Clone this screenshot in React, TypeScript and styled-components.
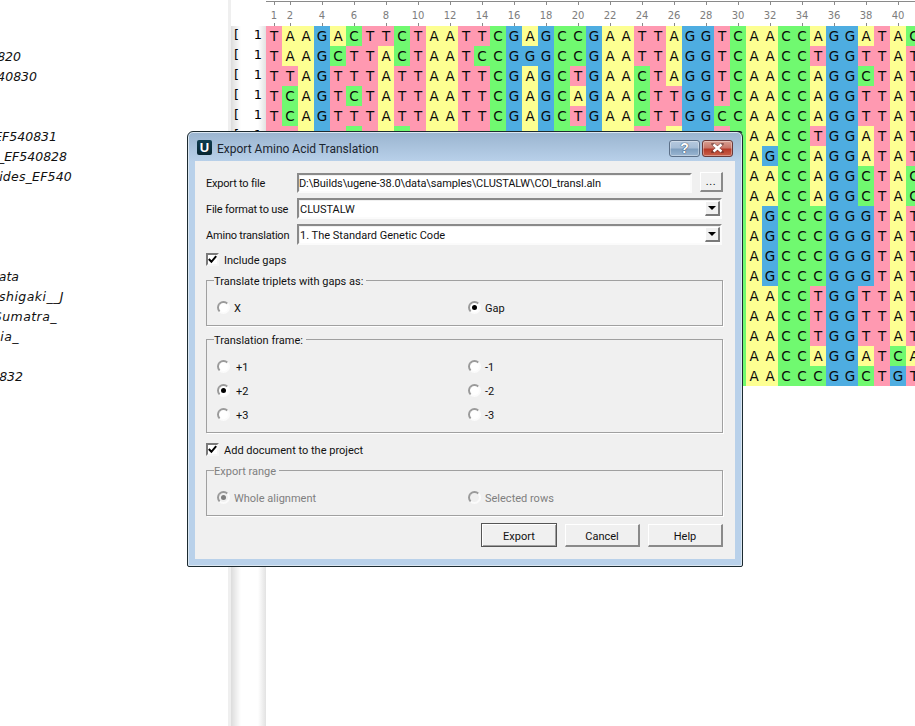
import React from "react";
import styled, { createGlobalStyle } from "styled-components";

const GlobalStyle = createGlobalStyle`
  html, body { margin: 0; padding: 0; background: #fff; overflow: hidden; }
  #root { width: 915px; height: 726px; }
`;

const BASE_COLORS: Record<string, string> = {
  A: "#fdff92",
  C: "#70f970",
  G: "#4eade1",
  T: "#ff99b1",
};

const PREFIX = "TTAGTCTACTAATTCGAGCCGAATTAGGTC";
const ROWS = [
  "TAAGACTTCTAATTCGAGCCGAATTAGGTCAACCAGGATAC",
  "TAAGCTTACTAATCCGGGCCGAATTAGGTCAACCTGGTTAT",
  "TTAGTTTATTAATTCGAGCTGAACTAGGTCAACCAGGCTAT",
  "TCAGTCTATTAATTCGAGCAGAACTTGGTCAACCAGGTTAT",
  "TCAGTTTATTAATTCGAGCTGAACTTGGCCAACCAGGTTAT",
  PREFIX + "AACCTGGATAT",
  PREFIX + "AGCCAGGATAT",
  PREFIX + "AACCAGGCTAC",
  PREFIX + "AACCAGGCTAC",
  PREFIX + "AGCCCGGGTAT",
  PREFIX + "AGCCCGGGTAT",
  PREFIX + "AGCCCGGGTAT",
  PREFIX + "AGCCCGGGTAT",
  PREFIX + "AACCTGGTTAT",
  PREFIX + "AACCTGGTTAT",
  PREFIX + "AACCTGGTTAT",
  PREFIX + "AACCAGGATCA",
  PREFIX + "AACCCGGCTGT",
];

const NAMES: { text: string; end: number; track?: number }[] = [
  { text: "", end: 0 },
  { text: "820", end: 21 },
  { text: "40830", end: 37 },
  { text: "", end: 0 },
  { text: "", end: 0 },
  { text: "EF540831", end: 57 },
  { text: "_EF540828", end: 67 },
  { text: "ides_EF540", end: 72, track: 0.2 },
  { text: "", end: 0 },
  { text: "", end: 0 },
  { text: "", end: 0 },
  { text: "", end: 0 },
  { text: "ata", end: 19 },
  { text: "shigaki__J", end: 64, track: 0.45 },
  { text: "Sumatra_", end: 57, track: 0.45 },
  { text: "ia_", end: 19, track: 0.45 },
  { text: "", end: 0 },
  { text: "832", end: 23 },
];

const Page = styled.div`
  position: relative;
  display: flex;
  width: 915px;
  height: 726px;
  overflow: hidden;
  background: #fff;
  font-family: "DejaVu Sans", Verdana, sans-serif;
  color: #000;
`;

const NamesColumn = styled.div`
  width: 228px;
  flex: none;
  padding-top: 26px;
  box-sizing: border-box;
  overflow: hidden;
`;

const NameRow = styled.div<{ $end: number; $track?: number }>`
  width: ${(p) => p.$end}px;
  height: 20px;
  display: flex;
  justify-content: flex-end;
  align-items: center;
  white-space: nowrap;
  font-size: 12.5px;
  font-style: italic;
  letter-spacing: ${(p) => p.$track ?? 0}px;
  color: #101010;
`;

const Splitter = styled.div`
  width: 3px;
  flex: none;
  background: #efefef;
`;

const Gutter = styled.div`
  width: 35px;
  flex: none;
  padding-top: 26px;
  box-sizing: border-box;
`;

const GutterBody = styled.div`
  height: 700px;
  background:
    linear-gradient(to right, #dcdcdc 0, #ffffff 10px, #ffffff 27px, #e2e2e2 35px);
`;

const GutterRow = styled.div`
  height: 20px;
  box-sizing: border-box;
  display: flex;
  justify-content: space-between;
  align-items: center;
  padding: 0 4px 4px 3px;
  font-size: 13px;
`;

const Alignment = styled.div`
  flex: none;
  width: 656px;
`;

const Ruler = styled.div`
  height: 26px;
  display: flex;
  box-sizing: border-box;
  padding-top: 1px;
`;

const RulerCell = styled.div<{ $tick: boolean }>`
  position: relative;
  width: 16px;
  flex: none;
  height: 25px;
  display: flex;
  justify-content: center;
  padding-top: 8px;
  box-sizing: border-box;
  border-top: 1px solid #8a8a8a;
  font-size: 10px;
  line-height: 12px;
  color: #7d7d7d;
  &::before,
  &::after {
    content: "";
    display: ${(p) => (p.$tick ? "block" : "none")};
    position: absolute;
    left: 8px;
    width: 1px;
    background: #8a8a8a;
  }
  &::before { top: 0; height: 3px; }
  &::after { bottom: 0; height: 3px; }
`;

const Grid = styled.div`
  display: grid;
  grid-template-columns: repeat(41, 16px);
  grid-auto-rows: 20px;
`;

const Cell = styled.div<{ $base: string }>`
  display: flex;
  align-items: center;
  justify-content: center;
  background: ${(p) => BASE_COLORS[p.$base]};
  font-size: 13.5px;
  color: #0a0a0a;
`;

/* ---------- dialog window ---------- */

const Dialog = styled.div`
  position: absolute;
  left: 187px;
  top: 131px;
  width: 556px;
  height: 436px;
  box-sizing: border-box;
  display: flex;
  flex-direction: column;
  border: 1px solid #1c2a30;
  border-radius: 6px 6px 2px 2px;
  box-shadow: inset 0 0 0 1px #dbe7f2;
  background: linear-gradient(to bottom, #9ab4cf 0, #b9d1ea 30px, #b9d1ea 100%);
  padding: 0 7px 7px 7px;
  font-family: Roboto, Tahoma, sans-serif;
  font-size: 11px;
  color: #111;
`;

const TitleBar = styled.div`
  height: 29px;
  flex: none;
  display: flex;
  align-items: center;
  padding-left: 2px;
  padding-top: 1px;
  box-sizing: border-box;
`;

const AppIcon = styled.div`
  width: 15px;
  height: 15px;
  flex: none;
  display: flex;
  align-items: center;
  justify-content: center;
  border-radius: 2px;
  background: linear-gradient(to bottom, #0f3d4f, #062430);
  color: #fff;
  font-family: "Liberation Sans", sans-serif;
  font-weight: 700;
  font-size: 13px;
`;

const TitleText = styled.div`
  margin-left: 5px;
  padding-top: 4px;
  font-size: 12px;
  color: #1b2530;
  flex: 1;
  white-space: nowrap;
`;

const CaptionButtons = styled.div`
  display: flex;
  gap: 2px;
  margin-right: 2px;
  margin-top: 2px;
`;

const CaptionButton = styled.div<{ $close?: boolean }>`
  width: 31px;
  height: 17px;
  box-sizing: border-box;
  display: flex;
  align-items: center;
  justify-content: center;
  border: 1px solid ${(p) => (p.$close ? "#6a3a3a" : "#5c7088")};
  border-radius: 3px;
  box-shadow: inset 0 0 0 1px rgba(255, 255, 255, 0.35);
  background: ${(p) =>
    p.$close
      ? "linear-gradient(to bottom, #d8a093 0, #c9776a 45%, #b63a28 55%, #c9604a 100%)"
      : "linear-gradient(to bottom, #b5c9de 0, #a6bdd6 45%, #7f9fbf 55%, #9ab6d2 100%)"};
`;

const Client = styled.div`
  flex: 1;
  background: #f0f0f0;
  padding: 12px 12px 0 11px;
  display: flex;
  flex-direction: column;
`;

const FormRow = styled.div<{ $top?: number }>`
  display: grid;
  grid-template-columns: 91px 1fr;
  align-items: center;
  margin-top: ${(p) => p.$top ?? 0}px;
`;

const FieldLabel = styled.div<{ $nudge?: boolean }>`
  white-space: nowrap;
  letter-spacing: -0.2px;
  padding-top: ${(p) => (p.$nudge ? 2 : 0)}px;
`;

const FileField = styled.div`
  display: flex;
  align-items: flex-start;
  gap: 8px;
`;

const sunken = `
  box-sizing: border-box;
  border-style: solid;
  border-width: 2px;
  border-color: #8a8a8a #fbfbfb #fbfbfb #8a8a8a;
  background: #fff;
  box-shadow: inset 1px 1px 0 #f0f0f0;
`;

const TextInput = styled.div`
  ${sunken}
  flex: 1;
  height: 20px;
  display: flex;
  align-items: center;
  padding-left: 0;
  letter-spacing: -0.1px;
  white-space: nowrap;
`;

const BrowseButton = styled.div`
  width: 23px;
  height: 20px;
  box-sizing: border-box;
  margin-top: -1px;
  display: flex;
  justify-content: center;
  align-items: center;
  border-style: solid;
  border-width: 1px 2px 2px 1px;
  border-color: #fff #8a8a8a #8a8a8a #fff;
  padding-bottom: 1px;
  letter-spacing: 0.6px;
`;

const Combo = styled.div`
  ${sunken}
  height: 21px;
  margin-right: 1px;
  display: flex;
  align-items: center;
  justify-content: space-between;
  padding-left: 1px;
  white-space: nowrap;
`;

const ComboText = styled.span`
  padding-top: 2px;
`;

const ComboArrow = styled.div`
  width: 15px;
  height: 15px;
  box-sizing: border-box;
  display: flex;
  justify-content: center;
  align-items: center;
  border-style: solid;
  border-width: 1px 2px 2px 1px;
  border-color: #fff #7a7a7a #7a7a7a #fff;
  background: #f0f0f0;
  &::after {
    content: "";
    border-left: 4px solid transparent;
    border-right: 4px solid transparent;
    border-top: 4px solid #000;
  }
`;

const CheckRow = styled.div<{ $top: number }>`
  display: flex;
  align-items: center;
  gap: 5px;
  height: 16px;
  box-sizing: border-box;
  padding-top: 2px;
  margin-top: ${(p) => p.$top}px;
`;

const CheckBox = styled.div`
  width: 13px;
  height: 13px;
  flex: none;
  margin-top: -2px;
  ${sunken}
  border-width: 2px;
  border-color: #7a7a7a #f6f6f6 #f6f6f6 #7a7a7a;
  box-shadow: none;
  display: flex;
  align-items: center;
  justify-content: center;
`;

const Group = styled.div<{ $top: number }>`
  position: relative;
  margin-top: ${(p) => p.$top}px;
  border: 1px solid #a0a0a0;
  box-shadow: 1px 1px 0 #fff;
  padding: 18px 0 10px 10px;
`;

const GroupTitle = styled.div<{ $disabled?: boolean }>`
  position: absolute;
  top: -6px;
  left: 7px;
  padding-right: 3px;
  background: #f0f0f0;
  line-height: 14px;
  white-space: nowrap;
  color: ${(p) => (p.$disabled ? "#7f7f7f" : "#111")};
`;

const RadioGrid = styled.div`
  display: grid;
  grid-template-columns: 251px 1fr;
  grid-auto-rows: 16px;
  row-gap: 8px;
`;

const RadioItem = styled.div<{ $disabled?: boolean; $gap: number }>`
  display: flex;
  align-items: center;
  gap: ${(p) => p.$gap}px;
  box-sizing: border-box;
  padding-top: 2px;
  color: ${(p) => (p.$disabled ? "#7f7f7f" : "#111")};
  white-space: nowrap;
`;

const RadioMark = styled.div<{ $checked?: boolean; $disabled?: boolean }>`
  width: 13px;
  height: 13px;
  flex: none;
  margin-top: -2px;
  box-sizing: border-box;
  border-radius: 50%;
  border: 2px solid;
  border-color: #9a9a9a #fbfbfb #fbfbfb #9a9a9a;
  background: ${(p) => (p.$disabled ? "#f0f0f0" : "#fff")};
  display: flex;
  align-items: center;
  justify-content: center;
  &::after {
    content: "";
    display: ${(p) => (p.$checked ? "block" : "none")};
    width: 5px;
    height: 5px;
    border-radius: 50%;
    background: ${(p) => (p.$disabled ? "#7f7f7f" : "#000")};
  }
`;

const ButtonRow = styled.div`
  margin-top: 7px;
  display: flex;
  justify-content: flex-end;
  align-items: flex-end;
  gap: 8px;
`;

const PushButton = styled.div<{ $default?: boolean }>`
  box-sizing: border-box;
  width: ${(p) => (p.$default ? 76 : 75)}px;
  height: ${(p) => (p.$default ? 24 : 23)}px;
  display: flex;
  align-items: center;
  justify-content: center;
  padding-top: 2px;
  background: #f0f0f0;
  border-style: solid;
  ${(p) =>
    p.$default
      ? `border-width: 1px; border-color: #555;
         box-shadow: inset 1px 1px 0 #fff, inset -1px -1px 0 #a0a0a0;`
      : `border-width: 1px 2px 2px 1px; border-color: #fff #8a8a8a #8a8a8a #fff;`}
`;

const Check = () => (
  <svg width="9" height="9" viewBox="0 0 9 9">
    <path d="M0.8 4 L3.4 6.8 L8.2 1.2" fill="none" stroke="#000" strokeWidth="2" />
  </svg>
);

const CloseGlyph = () => (
  <svg width="13" height="10" viewBox="0 0 13 10">
    <path
      d="M2 1 L11 9 M11 1 L2 9"
      stroke="#3a2020"
      strokeWidth="3.6"
      strokeLinecap="round"
      opacity="0.45"
    />
    <path d="M2.5 1.5 L10.5 8.5 M10.5 1.5 L2.5 8.5" stroke="#fff" strokeWidth="2.4" />
  </svg>
);

const HelpGlyph = styled.span`
  font-family: "Liberation Sans", sans-serif;
  font-weight: 700;
  font-size: 14px;
  color: #fff;
  text-shadow: 0 0 1px #2e4058, 0 0 1px #2e4058;
`;

const Radio = ({
  label,
  checked,
  disabled,
  gap = 4,
}: {
  label: string;
  checked?: boolean;
  disabled?: boolean;
  gap?: number;
}) => (
  <RadioItem $disabled={disabled} $gap={gap}>
    <RadioMark $checked={checked} $disabled={disabled} />
    {label}
  </RadioItem>
);

export default function App() {
  const rulerNumbers = Array.from({ length: 41 }, (_, i) => i + 1);
  return (
    <Page>
      <GlobalStyle />
      <NamesColumn>
        {NAMES.map((n, i) => (
          <NameRow key={i} $end={n.end} $track={n.track}>
            {n.text}
          </NameRow>
        ))}
      </NamesColumn>
      <Splitter />
      <Gutter>
        <GutterBody>
          {ROWS.map((_, i) => (
            <GutterRow key={i}>
              <span>[</span>
              <span>1</span>
            </GutterRow>
          ))}
        </GutterBody>
      </Gutter>
      <Alignment>
        <Ruler>
          {rulerNumbers.map((n) => {
            const labelled = n === 1 || n % 2 === 0;
            return (
              <RulerCell key={n} $tick={labelled}>
                {labelled && n <= 40 ? n : ""}
              </RulerCell>
            );
          })}
        </Ruler>
        <Grid>
          {ROWS.map((row, r) =>
            row.split("").map((b, c) => (
              <Cell key={`${r}-${c}`} $base={b}>
                {b}
              </Cell>
            ))
          )}
        </Grid>
      </Alignment>

      <Dialog>
        <TitleBar>
          <AppIcon>U</AppIcon>
          <TitleText>Export Amino Acid Translation</TitleText>
          <CaptionButtons>
            <CaptionButton>
              <HelpGlyph>?</HelpGlyph>
            </CaptionButton>
            <CaptionButton $close>
              <CloseGlyph />
            </CaptionButton>
          </CaptionButtons>
        </TitleBar>
        <Client>
          <FormRow>
            <FieldLabel>Export to file</FieldLabel>
            <FileField>
              <TextInput>D:\Builds\ugene-38.0\data\samples\CLUSTALW\COI_transl.aln</TextInput>
              <BrowseButton>...</BrowseButton>
            </FileField>
          </FormRow>
          <FormRow $top={5}>
            <FieldLabel $nudge>File format to use</FieldLabel>
            <Combo>
              <ComboText>CLUSTALW</ComboText>
              <ComboArrow />
            </Combo>
          </FormRow>
          <FormRow $top={5}>
            <FieldLabel $nudge>Amino translation</FieldLabel>
            <Combo>
              <ComboText>1. The Standard Genetic Code</ComboText>
              <ComboArrow />
            </Combo>
          </FormRow>
          <CheckRow $top={6}>
            <CheckBox>
              <Check />
            </CheckBox>
            Include gaps
          </CheckRow>
          <Group $top={13}>
            <GroupTitle>Translate triplets with gaps as:</GroupTitle>
            <RadioGrid>
              <Radio label="X" />
              <Radio label="Gap" checked />
            </RadioGrid>
          </Group>
          <Group $top={13}>
            <GroupTitle>Translation frame:</GroupTitle>
            <RadioGrid>
              <Radio label="+1" gap={6} />
              <Radio label="-1" />
              <Radio label="+2" checked gap={6} />
              <Radio label="-2" />
              <Radio label="+3" gap={6} />
              <Radio label="-3" />
            </RadioGrid>
          </Group>
          <CheckRow $top={8}>
            <CheckBox>
              <Check />
            </CheckBox>
            Add document to the project
          </CheckRow>
          <Group $top={13}>
            <GroupTitle $disabled>Export range</GroupTitle>
            <RadioGrid>
              <Radio label="Whole alignment" checked disabled />
              <Radio label="Selected rows" disabled />
            </RadioGrid>
          </Group>
          <ButtonRow>
            <PushButton $default>Export</PushButton>
            <PushButton>Cancel</PushButton>
            <PushButton>Help</PushButton>
          </ButtonRow>
        </Client>
      </Dialog>
    </Page>
  );
}
